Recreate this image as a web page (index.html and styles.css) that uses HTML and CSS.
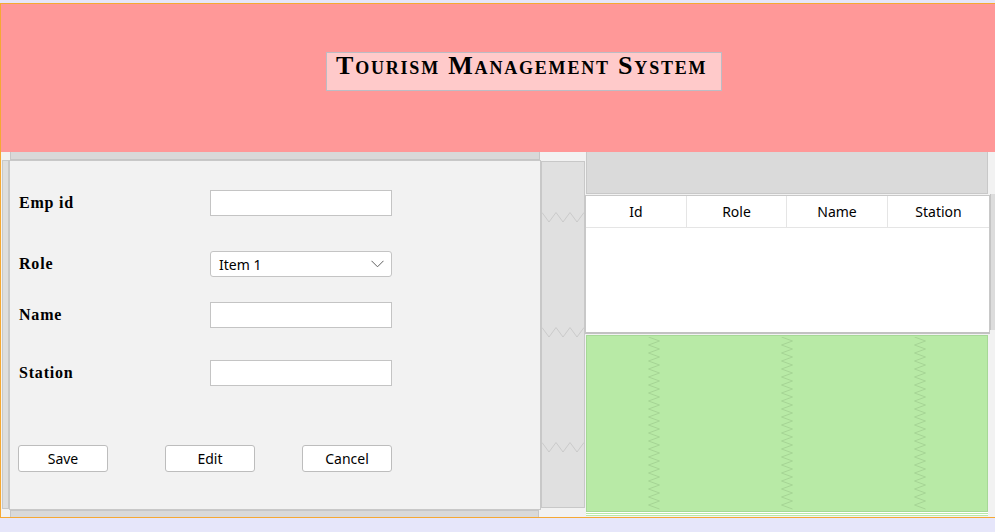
FILE: index.html
```html
<!DOCTYPE html>
<html lang="en">
<head>
<meta charset="utf-8">
<title>Tourism Management System</title>
<link rel="stylesheet" href="styles.css">
</head>
<body>
<div class="frame">
  <header class="banner">
    <div class="title">Tourism Management System</div>
  </header>
  <main class="workspace">
    <section class="left-col">
      <div class="bar-top"></div>
      <div class="bar-left"></div>
      <div class="panel">
        <div class="row row-1">
          <label class="label">Emp id</label>
          <div class="input"></div>
        </div>
        <div class="row row-2">
          <label class="label">Role</label>
          <div class="input combo">
            <span>Item 1</span>
            <svg class="chev" width="13" height="8" viewBox="0 0 13 8"><polyline points="0.5,0.8 6.5,6.8 12.5,0.8" fill="none" stroke="#606060" stroke-width="1"/></svg>
          </div>
        </div>
        <div class="row row-3">
          <label class="label">Name</label>
          <div class="input"></div>
        </div>
        <div class="row row-4">
          <label class="label">Station</label>
          <div class="input"></div>
        </div>
        <div class="actions">
          <button class="btn btn-save">Save</button>
          <button class="btn btn-edit">Edit</button>
          <button class="btn btn-cancel">Cancel</button>
        </div>
      </div>
      <div class="bar-bottom"></div>
    </section>
    <div class="gap-col">
      <div class="gap-bar">
        <svg class="hzig" width="42" height="11" viewBox="0 0 42 11"><polyline points="0,0.5 7,10 14,0.5 21,10 28,0.5 35,10 42,0.5" fill="none" stroke="#cacaca" stroke-width="1"/></svg>
        <svg class="hzig" width="42" height="11" viewBox="0 0 42 11"><polyline points="0,0.5 7,10 14,0.5 21,10 28,0.5 35,10 42,0.5" fill="none" stroke="#cacaca" stroke-width="1"/></svg>
        <svg class="hzig" width="42" height="11" viewBox="0 0 42 11"><polyline points="0,0.5 7,10 14,0.5 21,10 28,0.5 35,10 42,0.5" fill="none" stroke="#cacaca" stroke-width="1"/></svg>
      </div>
    </div>
    <section class="right-col">
      <div class="right-top"></div>
      <div class="table">
        <div class="thead">
          <div class="th">Id</div>
          <div class="th">Role</div>
          <div class="th">Name</div>
          <div class="th">Station</div>
        </div>
      </div>
      <div class="green">
        <div class="gcell"><svg class="vzig" width="12" height="174" viewBox="0 0 12 174"><polyline points="0.5,0 11.5,4 0.5,8 11.5,12 0.5,16 11.5,20 0.5,24 11.5,28 0.5,32 11.5,36 0.5,40 11.5,44 0.5,48 11.5,52 0.5,56 11.5,60 0.5,64 11.5,68 0.5,72 11.5,76 0.5,80 11.5,84 0.5,88 11.5,92 0.5,96 11.5,100 0.5,104 11.5,108 0.5,112 11.5,116 0.5,120 11.5,124 0.5,128 11.5,132 0.5,136 11.5,140 0.5,144 11.5,148 0.5,152 11.5,156 0.5,160 11.5,164 0.5,168 11.5,172" fill="none" stroke="#a6d595" stroke-width="1"/></svg></div>
        <div class="gcell"><svg class="vzig" width="12" height="174" viewBox="0 0 12 174"><polyline points="0.5,0 11.5,4 0.5,8 11.5,12 0.5,16 11.5,20 0.5,24 11.5,28 0.5,32 11.5,36 0.5,40 11.5,44 0.5,48 11.5,52 0.5,56 11.5,60 0.5,64 11.5,68 0.5,72 11.5,76 0.5,80 11.5,84 0.5,88 11.5,92 0.5,96 11.5,100 0.5,104 11.5,108 0.5,112 11.5,116 0.5,120 11.5,124 0.5,128 11.5,132 0.5,136 11.5,140 0.5,144 11.5,148 0.5,152 11.5,156 0.5,160 11.5,164 0.5,168 11.5,172" fill="none" stroke="#a6d595" stroke-width="1"/></svg></div>
        <div class="gcell"><svg class="vzig" width="12" height="174" viewBox="0 0 12 174"><polyline points="0.5,0 11.5,4 0.5,8 11.5,12 0.5,16 11.5,20 0.5,24 11.5,28 0.5,32 11.5,36 0.5,40 11.5,44 0.5,48 11.5,52 0.5,56 11.5,60 0.5,64 11.5,68 0.5,72 11.5,76 0.5,80 11.5,84 0.5,88 11.5,92 0.5,96 11.5,100 0.5,104 11.5,108 0.5,112 11.5,116 0.5,120 11.5,124 0.5,128 11.5,132 0.5,136 11.5,140 0.5,144 11.5,148 0.5,152 11.5,156 0.5,160 11.5,164 0.5,168 11.5,172" fill="none" stroke="#a6d595" stroke-width="1"/></svg></div>
      </div>
      <div class="green-foot"></div>
    </section>
    <div class="edge-col">
      <div class="edge-bar"></div>
    </div>
  </main>
</div>
</body>
</html>
```
FILE: styles.css
```css
html, body {
  margin: 0;
  padding: 0;
}
body {
  width: 995px;
  height: 532px;
  overflow: hidden;
  background: #e6e6fa;
  font-family: "Noto Sans", "Liberation Sans", sans-serif;
}
.frame {
  margin-top: 3px;
  height: 513px;
  border-top: 1px solid #f5a833;
  border-left: 1px solid #f5a833;
  border-bottom: 1px solid #f5a833;
  background: #f2f2f2;
}
.banner {
  height: 148px;
  box-sizing: border-box;
  background: #ff9898;
  padding: 48px 0 0 325px;
}
.title {
  width: 396px;
  height: 39px;
  box-sizing: border-box;
  background: #ffcaca;
  border: 1px solid #bcbcc4;
  font-family: "Liberation Serif", "DejaVu Serif", serif;
  font-weight: bold;
  font-variant: small-caps;
  font-size: 26px;
  letter-spacing: 1.8px;
  line-height: 26px;
  padding: 0 0 0 9px;
  color: #000;
  white-space: nowrap;
}
.workspace {
  display: flex;
  height: 365px;
  background: #f2f2f2;
}
.left-col {
  width: 540px;
  flex: none;
  display: grid;
  grid-template-columns: 8px 532px;
  grid-template-rows: 8px 350px 7px;
}
.bar-top {
  grid-column: 2;
  grid-row: 1;
  margin: 0 1px;
  background: #d9d9d9;
  border: 1px solid #c6c6c6;
  border-top: none;
}
.bar-left {
  grid-column: 1;
  grid-row: 2;
  margin-left: 1px;
  background: #dedede;
  border: 1px solid #c8c8c8;
  margin-bottom: 1px;
}
.panel {
  grid-column: 2;
  grid-row: 2;
  box-sizing: border-box;
  border: 1px solid #c8c8c8;
  background: #f2f2f2;
  padding: 29px 0 0 9px;
}
.bar-bottom {
  grid-column: 2;
  grid-row: 3;
  margin: 0 2px 0 1px;
  background: #d9d9d9;
  border: 1px solid #c6c6c6;
  border-bottom: none;
}
.row {
  display: flex;
  align-items: center;
  height: 26px;
}
.row-2 { margin-top: 35px; }
.row-3 { margin-top: 25px; }
.row-4 { margin-top: 32px; }
.label {
  width: 191px;
  flex: none;
  font-family: "Liberation Serif", "DejaVu Serif", serif;
  font-weight: bold;
  font-size: 16px;
  letter-spacing: 0.8px;
  color: #000;
}
.input {
  width: 182px;
  height: 26px;
  box-sizing: border-box;
  background: #fff;
  border: 1px solid #c4c4c4;
}
.combo {
  display: flex;
  align-items: center;
  justify-content: space-between;
  border-radius: 3px;
  padding: 0 7px 0 8px;
  font-size: 14px;
  color: #000;
}
.chev {
  display: block;
}
.actions {
  display: flex;
  margin-top: 59px;
  margin-left: -1px;
}
.btn {
  width: 90px;
  height: 27px;
  box-sizing: border-box;
  background: #fff;
  border: 1px solid #bdbdbd;
  border-radius: 3px;
  font-family: "Noto Sans", "Liberation Sans", sans-serif;
  font-size: 14px;
  color: #000;
  padding: 0;
}
.btn-edit { margin-left: 57px; }
.btn-cancel { margin-left: 47px; }
.gap-col {
  width: 44px;
  flex: none;
  padding-top: 9px;
}
.gap-bar {
  height: 347px;
  box-sizing: border-box;
  background: #e0e0e0;
  border: 1px solid #c8c8c8;
  display: flex;
  flex-direction: column;
  padding-top: 50px;
  gap: 104px;
}
.hzig {
  display: block;
}
.right-col {
  width: 405px;
  flex: none;
  display: flex;
  flex-direction: column;
}
.right-top {
  height: 42px;
  box-sizing: border-box;
  margin: 0 2px 0 1px;
  background: #dadada;
  border: 1px solid #c8c8c8;
  border-top: none;
}
.table {
  margin-top: 1px;
  height: 139px;
  box-sizing: border-box;
  background: #fff;
  border: 1px solid #c8c8c8;
  border-bottom: 2px solid #c2c2c2;
}
.thead {
  display: grid;
  grid-template-columns: 101px 100px 101px 1fr;
  height: 31px;
  border-bottom: 1px solid #e5e5e5;
}
.th {
  display: flex;
  align-items: center;
  justify-content: center;
  font-size: 14px;
  color: #000;
  border-right: 1px solid #e5e5e5;
}
.th:last-child {
  border-right: none;
}
.green {
  margin: 1px 2px 0 1px;
  height: 177px;
  box-sizing: border-box;
  background: #b8eaa6;
  border: 1px solid #a6d896;
  display: grid;
  grid-template-columns: 1fr 1fr 1fr;
}
.gcell {
  display: flex;
  justify-content: center;
  padding-top: 1px;
}
.vzig {
  display: block;
}
.green-foot {
  margin: 0 2px 0 1px;
  height: 4px;
  background: linear-gradient(#ffffff 0 1px, #b8eaa6 1px 2px, #ffffff 2px 3px, #b8eaa6 3px 4px);
}
.edge-col {
  flex: 1;
  padding-top: 42px;
}
.edge-bar {
  height: 136px;
  box-sizing: border-box;
  background: #dcdcdc;
  border-left: 1px solid #c4c4c4;
}
```
